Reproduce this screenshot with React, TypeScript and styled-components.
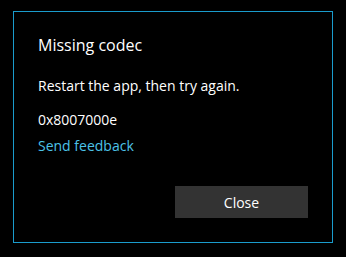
import React from "react";
import styled, { createGlobalStyle } from "styled-components";

const Global = createGlobalStyle`
  html, body { margin: 0; padding: 0; background: #000; }
  body { font-family: "Open Sans", "Noto Sans", sans-serif; color: #fff; }
`;

const Page = styled.div`
  width: 346px;
  height: 257px;
  background: #000;
  padding: 11px 0 0 13px;
  box-sizing: border-box;
`;

const Dialog = styled.div`
  width: 320px;
  height: 232px;
  box-sizing: border-box;
  border: 1px solid #1a9ccc;
  padding: 22px 24px 24px 24px;
  display: flex;
  flex-direction: column;
`;

const Title = styled.h1`
  margin: 0;
  font-size: 16px;
  font-weight: 400;
  line-height: 22px;
  color: #fff;
`;

const Message = styled.p<{ $top: number }>`
  margin: ${(p) => p.$top}px 0 0 0;
  font-size: 14px;
  line-height: 20px;
  color: #fff;
`;

const Link = styled.a`
  margin-top: 6px;
  font-size: 14px;
  line-height: 20px;
  color: #4cc2e8;
  text-decoration: none;
`;

const Footer = styled.div`
  margin-top: auto;
  display: flex;
  justify-content: flex-end;
`;

const Button = styled.button`
  width: 133px;
  height: 32px;
  border: none;
  background: #333333;
  color: #fff;
  font-family: inherit;
  font-size: 14px;
  padding: 0;
`;

export default function App() {
  return (
    <Page>
      <Global />
      <Dialog>
        <Title>Missing codec</Title>
        <Message $top={20}>Restart the app, then try again.</Message>
        <Message $top={14}>0x8007000e</Message>
        <Link href="#">Send feedback</Link>
        <Footer>
          <Button>Close</Button>
        </Footer>
      </Dialog>
    </Page>
  );
}
